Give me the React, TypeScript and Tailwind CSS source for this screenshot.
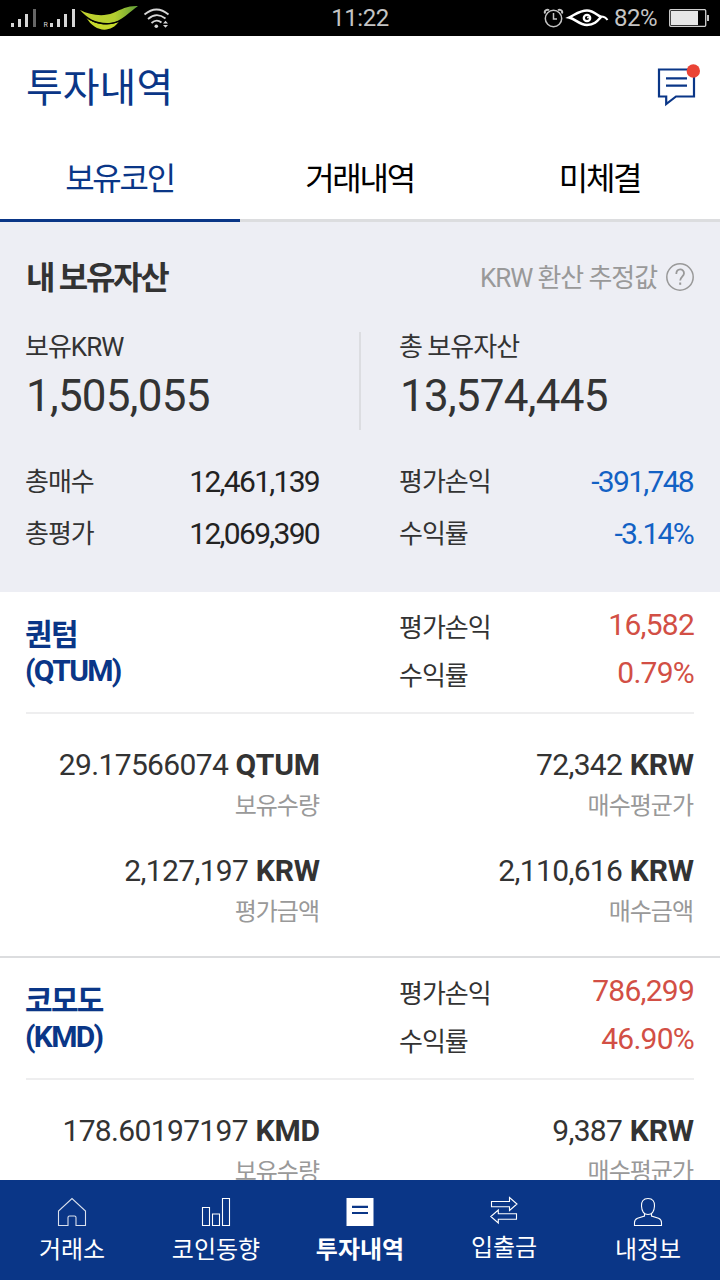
import type { ReactNode } from "react";

type Coin = {
  name: string;
  symbol: string;
  profit: string;
  rate: string;
  quantity: string;
  average: string;
  value?: string;
  cost?: string;
};

const coins: Coin[] = [
  { name: "퀀텀", symbol: "QTUM", profit: "16,582", rate: "0.79%", quantity: "29.17566074", average: "72,342", value: "2,127,197", cost: "2,110,616" },
  { name: "코모도", symbol: "KMD", profit: "786,299", rate: "46.90%", quantity: "178.60197197", average: "9,387" },
];

function StatusBar() {
  return (
    <div className="flex h-9 shrink-0 items-center justify-between bg-black text-[#c4c4c4]">
      <svg className="h-9 w-[180px]" viewBox="0 0 180 36">
        <g fill="#d6d6d6">
          <rect x="11" y="23" width="3" height="4" />
          <rect x="18" y="19" width="3" height="8" />
          <rect x="25" y="14" width="3" height="13" />
          <rect x="33" y="9" width="3" height="18" fill="#666" />
          <rect x="50" y="23" width="3" height="4" />
          <rect x="57" y="19" width="3" height="8" />
          <rect x="64" y="14" width="3" height="13" />
          <rect x="72" y="9" width="3" height="18" />
        </g>
        <text x="43.500" y="27" fontSize="7" fill="#d6d6d6" fontFamily="Roboto, sans-serif">R</text>
        <defs>
          <linearGradient id="leaf" x1="0" x2="1" y1="0" y2="0">
            <stop offset="0" stopColor="#c3d22e" />
            <stop offset="0.6" stopColor="#b3cf30" />
            <stop offset="1" stopColor="#5f9c38" />
          </linearGradient>
        </defs>
        <path d="M80 10 C90 15 103 17 113 13 C122 9 128 5.500 138 6 C130 11 122 22 109 23 C96 23.500 87 18 80 10Z" fill="url(#leaf)" />
        <path d="M86 17 C95 25.500 110 26.500 119 21.500 C111 33 95 33 86 17Z" fill="#c6d82c" />
        <path d="M85 16.500 C95 25 110 25.500 120 21" fill="none" stroke="#000" strokeWidth="1" />
        <g fill="none" stroke="#d6d6d6" strokeWidth="1.800">
          <path d="M144.500 14.500 Q156.500 4.500 168.500 14.500" />
          <path d="M148 19 Q156.500 11.500 165.500 18.500" />
          <path d="M151.500 23 Q156.500 18.500 161.500 22.500" />
        </g>
        <circle cx="156.300" cy="26.200" r="1.800" fill="#d6d6d6" />
        <path d="M163 23.600 L165.500 20.800 L168 23.600Z M163 25 L165.500 27.800 L168 25Z" fill="#d6d6d6" />
      </svg>
      <span className="-ml-0.5 pt-px text-2xl leading-[35px] tracking-[-0.5px]">11:22</span>
      <div className="flex h-9 items-center">
        <svg className="h-9 w-[70px]" viewBox="542 0 70 36" fill="none">
          <g stroke="#c4c4c4" strokeWidth="1.500">
            <circle cx="553.500" cy="18.500" r="8.200" />
            <path d="M553.500 13 V19 H557" />
            <path d="M545 13.500 C544 10.500 547 9 549 10.200 M562 13.500 C563 10.500 560 9 558 10.200" strokeWidth="2" />
          </g>
          <path d="M569 17.500 C576 14 580 10.500 587 10.500 C593 10.500 597 15 601 17 C597 21.500 594 25 587 25 C579 25 576 19 569 17.500Z" stroke="#fff" strokeWidth="2.500" />
          <path d="M600 16.500 Q605 16 607.500 20" stroke="#fff" strokeWidth="2" />
          <circle cx="587" cy="18" r="3.200" stroke="#fff" strokeWidth="2.300" />
          <circle cx="588" cy="17.500" r="1" fill="#fff" />
        </svg>
        <span className="ml-0.5 w-[55px] text-2xl leading-9 tracking-[-0.5px]">82%</span>
        <svg className="h-9 w-[51px]" viewBox="669 0 51 36">
          <rect x="669.700" y="9.700" width="36" height="16.600" rx="1" fill="none" stroke="#d0d0d0" strokeWidth="1.300" />
          <rect x="671" y="11" width="27" height="14" fill="#e6e6e6" />
          <rect x="707" y="15" width="2" height="6" fill="#c4c4c4" />
        </svg>
      </div>
    </div>
  );
}

function StatRow({ label, value, valueClass }: { label: string; value: string; valueClass: string }) {
  return (
    <div className="flex h-[52px] items-center justify-between leading-[52px]">
      <span className="-ml-px text-[26px] tracking-[-1px]">{label}</span>
      <span className={"pr-px text-[30px] tracking-[-1.7px] " + valueClass}>{value}</span>
    </div>
  );
}

function Summary() {
  return (
    <section className="h-[370px] shrink-0 bg-[#edeef4] px-[26px]">
      <div className="flex h-[110px] items-center justify-between">
        <h2 className="pt-px text-[32px] font-bold tracking-[-2.3px]">내 보유자산</h2>
        <div className="flex items-center gap-[9px] text-[26px] tracking-[-1.1px] text-[#999]">
          <span className="pt-0.5">KRW 환산 추정값</span>
          <svg className="size-7" viewBox="0 0 28 28" fill="none" stroke="#999" strokeWidth="1.500">
            <circle cx="14" cy="14" r="13.200" />
            <path d="M10.300 11 C10.300 5 18 5 18 10.300 C18 13.500 14.200 13.700 14.200 17.500" strokeWidth="1.800" />
            <path d="M14.200 19.500 V21.800" strokeWidth="2" />
          </svg>
        </div>
      </div>
      <div className="flex h-[98px]">
        <div className="w-[335px] border-r-2 border-[#dcdde1]">
          <div className="-ml-px text-[26px] leading-[30px] tracking-[-1px]">보유KRW</div>
          <div className="text-[44px] leading-[68px] tracking-[-0.75px]">1,505,055</div>
        </div>
        <div className="pl-[39px]">
          <div className="-ml-px text-[26px] leading-[30px] tracking-[-1px]">총 보유자산</div>
          <div className="text-[44px] leading-[68px] tracking-[-0.75px]">13,574,445</div>
        </div>
      </div>
      <div className="grid grid-cols-[294px_294px] justify-between pt-[26px]">
        <StatRow label="총매수" value="12,461,139" valueClass="text-[#222]" />
        <StatRow label="평가손익" value="-391,748" valueClass="text-[#1261c4]" />
        <StatRow label="총평가" value="12,069,390" valueClass="text-[#222]" />
        <StatRow label="수익률" value="-3.14%" valueClass="text-[#1261c4]" />
      </div>
    </section>
  );
}

function ProfitRow({ label, value }: { label: string; value: string }) {
  return (
    <div className="flex h-12 justify-between">
      <span className="-ml-px pt-0.5 text-[26px] leading-[48px] tracking-[-1px]">{label}</span>
      <span className="text-[30px] leading-[46px] tracking-[-0.75px] text-[#d24f45]">{value}</span>
    </div>
  );
}

function Amount({ value, unit, label }: { value: string; unit: string; label: string }) {
  return (
    <div className="h-20 text-right">
      <div className="text-[30px] leading-10">
        <span className="tracking-[-0.65px]">{value}</span> <b className="tracking-[-0.1px]">{unit}</b>
      </div>
      <div className="pt-0.5 pr-px text-2xl leading-[39px] tracking-[-1px] text-[#999]">{label}</div>
    </div>
  );
}

function CoinCard({ coin }: { coin: Coin }) {
  return (
    <article className="h-[366px] shrink-0 border-b-2 border-[#dcdddf] px-[26px]">
      <div className="flex h-[122px] justify-between border-b-2 border-[#eeeeef]">
        <h3 className="-ml-px pt-[25px] text-[30px] leading-9 font-bold tracking-[-1.7px] text-[#0a3687]">
          {coin.name}
          <br />({coin.symbol})
        </h3>
        <div className="w-[294px] pt-2.5">
          <ProfitRow label="평가손익" value={coin.profit} />
          <ProfitRow label="수익률" value={coin.rate} />
        </div>
      </div>
      <div className="grid grid-cols-[294px_294px] justify-between gap-y-[26px] pt-[31px]">
        <Amount value={coin.quantity} unit={coin.symbol} label="보유수량" />
        <Amount value={coin.average} unit="KRW" label="매수평균가" />
        {coin.value && <Amount value={coin.value} unit="KRW" label="평가금액" />}
        {coin.cost && <Amount value={coin.cost} unit="KRW" label="매수금액" />}
      </div>
    </article>
  );
}

function NavItem({ label, className = "", children }: { label: string; className?: string; children: ReactNode }) {
  return (
    <div className={"flex flex-1 flex-col items-center text-2xl text-white " + className}>
      <svg className="h-[30px] w-[30px]" viewBox="0 0 30 30" fill="none" stroke="#fff" strokeWidth="1.100">
        {children}
      </svg>
      <span className="pt-0.5 leading-[42px]">{label}</span>
    </div>
  );
}

export default function App() {
  return (
    <div className="flex h-[1280px] w-[720px] flex-col overflow-hidden bg-white font-['Roboto','Noto_Sans_CJK_KR',sans-serif] text-[#333]">
      <StatusBar />
      <header className="flex h-[103px] shrink-0 items-center justify-between pr-5 pl-[26px]">
        <h1 className="pt-0.5 text-[40px] text-[#0a3687]">투자내역</h1>
        <svg className="-mt-[3px] h-[44px] w-[44px]" viewBox="656 64 44 44" fill="none" stroke="#0a3687" strokeWidth="2.200">
          <path d="M659 69.500 H694 V96.500 H676 L666.200 104 V96.500 H659Z" />
          <path d="M666 78.300 H687 M666 85.600 H687" />
          <circle cx="693.300" cy="71" r="6.700" fill="#ea4335" stroke="none" />
        </svg>
      </header>
      <nav className="grid h-[83px] shrink-0 grid-cols-3 text-center text-[32px] leading-[80px] tracking-[-2.3px]">
        <div className="border-b-3 border-[#0a3687] pr-px text-[#0a3687]">보유코인</div>
        <div className="border-b-3 border-[#dcdddf] pr-px text-black">거래내역</div>
        <div className="border-b-3 border-[#dcdddf] pr-px text-black">미체결</div>
      </nav>
      <main className="flex min-h-0 flex-1 flex-col overflow-hidden">
        <Summary />
        {coins.map((coin) => (
          <CoinCard key={coin.symbol} coin={coin} />
        ))}
      </main>
      <footer className="flex h-[100px] shrink-0 bg-[#0a3687] pt-[17px]">
        <NavItem label="거래소">
          <path d="M1.500 28.500 V14 L15 1.500 L28.500 14 V28.500 H19 V20.500 Q19 19 17.500 19 H12.500 Q11 19 11 20.500 V28.500Z" strokeOpacity="0.85" />
        </NavItem>
        <NavItem label="코인동향">
          <path d="M1.500 10.500 H8.500 V28.500 H1.500Z M11.500 17 H18.500 V28.500 H11.500Z M21.500 1.500 H28.500 V28.500 H21.500Z" />
        </NavItem>
        <NavItem label="투자내역" className="font-bold">
          <path d="M1.500 1 H28.500 V29 H1.500Z" fill="#fff" stroke="none" />
          <path d="M7 9.900 H23 M7 16 H23" stroke="#0a3687" strokeWidth="2.200" />
        </NavItem>
        <NavItem label="입출금" className="-mt-0.5">
          <path d="M2.500 6.500 H20.500 V2.500 L28 9 L20.500 15.500 V11.800 H2.500Z M27.500 18.700 H9.300 V15 L1.800 21.500 L9.300 28 V24.300 H27.500Z" />
        </NavItem>
        <NavItem label="내정보">
          <path d="M15 1.500 C10 1.500 8.200 5 8.500 9 C8.700 13 10.500 17.500 15 17.500 C19.500 17.500 21.300 13 21.500 9 C21.800 5 20 1.500 15 1.500Z M11.500 16.500 V19 L4.500 21.200 Q1.500 22.500 1.500 25.500 V28.500 H28.500 V25.500 Q28.500 22.500 25.500 21.200 L18.500 19 V16.500" />
        </NavItem>
      </footer>
    </div>
  );
}
